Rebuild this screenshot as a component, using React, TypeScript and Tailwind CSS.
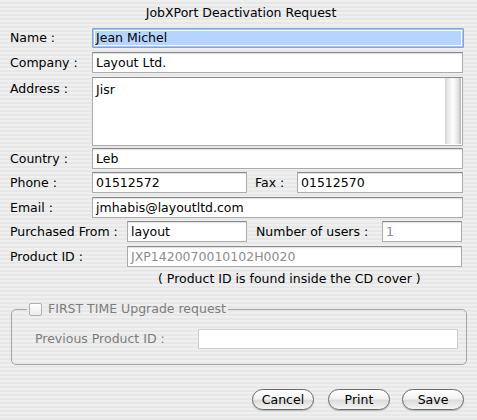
import React from "react";

const field =
  "h-[21px] bg-white border border-[#ababab] border-t-[#8a8a8a] shadow-[inset_0_1px_1px_rgba(0,0,0,0.13)] flex items-center pl-[3px] whitespace-nowrap overflow-hidden";

function Label({ children, w }: { children: React.ReactNode; w: string }) {
  return <div className={`${w} shrink-0 whitespace-nowrap`}>{children}</div>;
}

export default function App() {
  return (
    <div className="w-[477px] h-[420px] overflow-hidden bg-[repeating-linear-gradient(to_bottom,#efefef_0px,#efefef_2px,#e7e7e7_2px,#e7e7e7_4px)] font-['DejaVu_Sans',sans-serif] text-[12.5px] leading-[16px] text-black">
      <div className="pt-[5px] pl-[5px] text-center">JobXPort Deactivation Request</div>

      <div className="flex flex-col pl-[10px] pr-[14px]">
        {/* Name */}
        <div className="mt-[7px] flex items-center h-[20px]">
          <Label w="w-[82px]">Name :</Label>
          <div className="flex-1 h-[20px] mr-[-1px] border border-[#7fa6d9] bg-[#a6c6ef] p-[1px] rounded-[1px]">
            <div className="h-full border border-white bg-[#b5d5ff] flex items-center pl-[1px]">Jean Michel</div>
          </div>
        </div>
        {/* Company */}
        <div className="mt-[4px] flex items-center">
          <Label w="w-[82px]">Company :</Label>
          <div className={`${field} flex-1`}>Layout Ltd.</div>
        </div>
        {/* Address */}
        <div className="mt-[4px] flex items-start">
          <Label w="w-[82px] pt-[4px]">Address :</Label>
          <div className="flex-1 h-[69px] bg-white border border-[#ababab] border-t-[#8a8a8a] flex">
            <div className="flex-1 pl-[3px] pt-[4px]">Jisr</div>
            <div className="w-[16px] h-[66px] mr-[1px] bg-[linear-gradient(to_right,#d4d4d4_0%,#efefef_25%,#fdfdfd_50%,#e6e6e6_80%,#b9b9b9_100%)]" />
          </div>
        </div>
        {/* Country */}
        <div className="mt-[2px] flex items-center">
          <Label w="w-[82px]">Country :</Label>
          <div className={`${field} flex-1`}>Leb</div>
        </div>
        {/* Phone / Fax */}
        <div className="mt-[3px] flex items-center">
          <Label w="w-[82px]">Phone :</Label>
          <div className={`${field} w-[155px]`}>01512572</div>
          <Label w="w-[42px] ml-[8px]">Fax :</Label>
          <div className={`${field} flex-1`}>01512570</div>
        </div>
        {/* Email */}
        <div className="mt-[4px] flex items-center">
          <Label w="w-[82px]">Email :</Label>
          <div className={`${field} flex-1`}>jmhabis@layoutltd.com</div>
        </div>
        {/* Purchased / users */}
        <div className="mt-[3px] flex items-center">
          <Label w="w-[117px]">Purchased From :</Label>
          <div className={`${field} w-[120px]`}>layout</div>
          <Label w="w-[126px] ml-[9px]">Number of users :</Label>
          <div className={`${field} flex-1 mr-[1px] text-[#8d8d8d]`}>1</div>
        </div>
        {/* Product ID */}
        <div className="mt-[4px] flex items-center">
          <Label w="w-[117px]">Product ID :</Label>
          <div className={`${field} flex-1 mr-[1px] text-[#8d8d8d]`}>JXP1420070010102H0020</div>
        </div>
        <div className="mt-[4px] pl-[148px] whitespace-nowrap">( Product ID is found inside the CD cover )</div>
      </div>

      <fieldset className="mt-[14px] ml-[11px] mr-[10px] border border-[#a3a3a3] rounded-[5px] p-0">
        <legend className="ml-[15px] px-[2px] flex items-center text-[#7c7c7c] leading-[16px]">
          <span className="inline-block w-[13px] h-[13px] mr-[6px] rounded-[2px] border border-[#b0b0b0] bg-[linear-gradient(to_bottom,#ffffff,#ececec)]" />
          <span>FIRST TIME Upgrade request</span>
        </legend>
        <div className="flex items-center pl-[23px] pr-[8px] pt-[12px] pb-[15px]">
          <div className="w-[163px] shrink-0 text-[#7c7c7c] whitespace-nowrap">Previous Product ID :</div>
          <div className="flex-1 h-[20px] bg-white border border-[#cfcfcf]" />
        </div>
      </fieldset>

      <div className="mt-[24px] flex justify-end pr-[13px]">
        {["Cancel", "Print", "Save"].map((t, i) => (
          <button
            key={t}
            className={`w-[62px] h-[21px] ${i === 0 ? "" : i === 1 ? "ml-[14px]" : "ml-[12px]"} rounded-full border border-[#6a6a6a] bg-[linear-gradient(to_bottom,#ffffff_0%,#f3f3f3_45%,#dcdcdc_55%,#f4f4f4_100%)] shadow-[0_1px_1px_rgba(0,0,0,0.22)] text-[12.5px] leading-[16px] text-black flex items-center justify-center`}
          >
            {t}
          </button>
        ))}
      </div>
    </div>
  );
}
